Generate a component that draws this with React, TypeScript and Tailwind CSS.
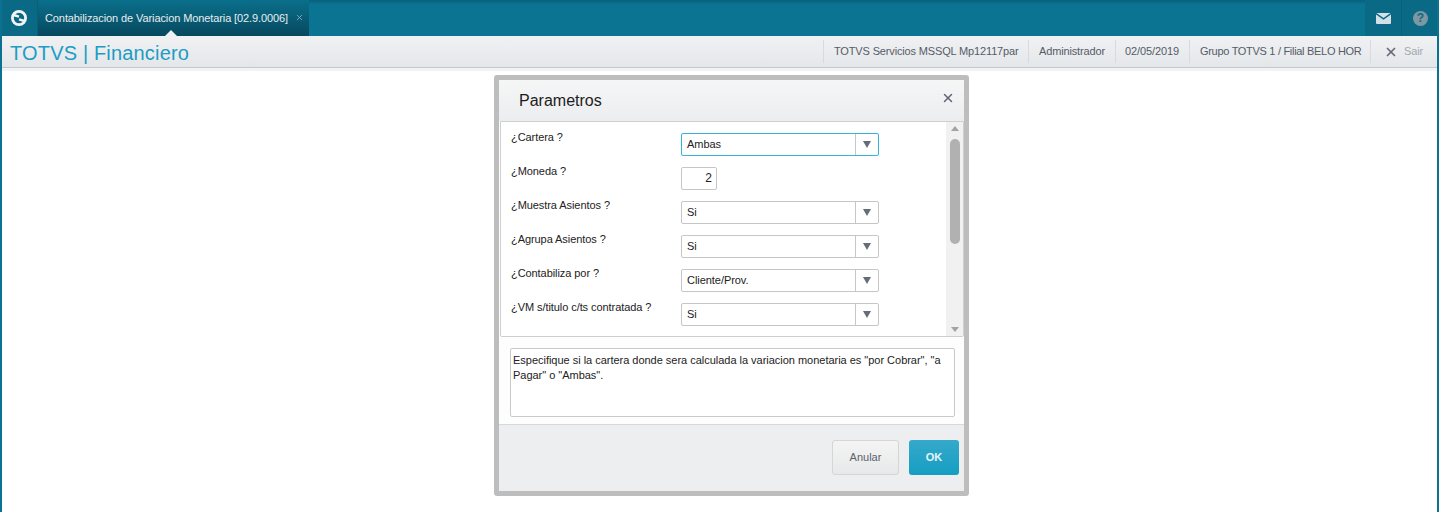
import { X } from 'lucide-react';

const ROWS = [
  { label: '¿Cartera ?', value: 'Ambas', active: true },
  { label: '¿Moneda ?', value: '2', number: true },
  { label: '¿Muestra Asientos ?', value: 'Si' },
  { label: '¿Agrupa Asientos ?', value: 'Si' },
  { label: '¿Contabiliza por ?', value: 'Cliente/Prov.' },
  { label: '¿VM s/titulo c/ts contratada ?', value: 'Si' },
];

const INFO = ['TOTVS Servicios MSSQL Mp12117par', 'Administrador', '02/05/2019', 'Grupo TOTVS 1 / Filial BELO HOR'];

function Logo() {
  return (
    <svg width="18" height="18" viewBox="0 0 18 18" fill="none">
      <circle cx="9" cy="9" r="6.6" stroke="#f1f5f7" strokeWidth="2.8" />
      <path d="M3.5 6 L9 7.6 M9 10.4 L14.5 12" stroke="#f1f5f7" strokeWidth="2.4" />
    </svg>
  );
}

function Field({ value, active }: { value: string; active?: boolean }) {
  return (
    <div className={`flex h-[23px] w-[198px] rounded-[2px] border bg-white ${active ? 'border-[#36b4d6]' : 'border-[#c6c6c6]'}`}>
      <span className="flex-1 pl-[5px] text-[11px] leading-[21px] tracking-[-0.05px] text-[#222]">{value}</span>
      <span className="flex w-[23px] items-center justify-center border-l border-[#c6c6c6]">
        <span className="h-0 w-0 border-x-[4.5px] border-t-[7px] border-x-transparent border-t-[#666c78]" />
      </span>
    </div>
  );
}

export default function App() {
  return (
    <div className="flex h-[512px] flex-col overflow-hidden border-x-2 border-[#0a7290] bg-white font-['Liberation_Sans',Arial,sans-serif]">
      {/* Top bar */}
      <div className="-mx-[2px] flex h-9 shrink-0 bg-[linear-gradient(#09607a,#0b7492_12%,#0b7492)]">
        <div className="flex w-[38px] items-center justify-center border-r border-[#095f78] bg-[#0a6a85]">
          <Logo />
        </div>
        <div className="relative flex w-[271px] items-center whitespace-nowrap bg-[linear-gradient(#0a6f8b,#07495f)] pl-[7px] text-[11px] tracking-[-0.1px] text-[#e6eef1]">
          <span>Contabilizacion de Variacion Monetaria [02.9.0006]</span>
          <X size={9} strokeWidth={2} className="ml-[7px] -translate-y-px text-[#9db9c4]" />
          <span className="absolute bottom-0 left-[127px] h-0 w-0 border-x-[6px] border-b-[6px] border-x-transparent border-b-[#eef0f2]" />
        </div>
        <div className="flex-1" />
        <div className="flex w-[37px] items-center justify-center border-r border-[#095f78] bg-[#0a6a85]">
          <svg width="15" height="11" viewBox="0 0 15 11">
            <path d="M0.5 0 H14.5 L7.5 5 Z" fill="#d3e1e7" />
            <path d="M0 1.5 L7.5 6.8 L15 1.5 V10 Q15 11 14 11 H1 Q0 11 0 10 Z" fill="#d3e1e7" />
          </svg>
        </div>
        <div className="flex w-[37px] items-center justify-center bg-[#0a6a85]">
          <span className="flex h-[15px] w-[15px] items-center justify-center rounded-full bg-[#7d97a3] text-[12px] font-bold text-[#0a6a85]">?</span>
        </div>
      </div>

      {/* Sub header */}
      <div className="flex h-[32px] shrink-0 items-center border-b border-[#c4c8cc] bg-[linear-gradient(#f0f1f3,#e4e7ea)]">
        <span className="translate-y-px pl-2 text-[20px] leading-none tracking-[0.17px] text-[#1e9cc4]">TOTVS | Financiero</span>
        <div className="ml-auto flex h-[23px] items-center text-[11px] text-[#555c66]">
          <span className="flex h-full w-[205px] items-center border-l border-[#d8dbde] pl-[10px] tracking-[-0.15px]">{INFO[0]}</span>
          <span className="flex h-full w-[87px] items-center border-l border-[#d8dbde] pl-[10px] tracking-[-0.15px]">{INFO[1]}</span>
          <span className="flex h-full w-[74px] items-center border-l border-[#d8dbde] pl-[9px] tracking-[-0.1px]">{INFO[2]}</span>
          <span className="flex h-full w-[181px] items-center border-l border-[#d8dbde] pl-[10px] tracking-[-0.3px]">{INFO[3]}</span>
          <span className="flex h-full w-[67px] items-center border-l border-[#d8dbde] pl-[13px]">
            <X size={14} strokeWidth={3} className="text-[#666d79]" />
            <span className="ml-[6px] tracking-[-0.1px] text-[#a3a8ae]">Sair</span>
          </span>
        </div>
      </div>
      <div className="h-[3px] shrink-0 bg-[#f2f3f4]" />

      {/* Dialog */}
      <div className="flex-1 pl-[492px] pt-1">
        <div className="h-[421px] w-[475px] overflow-hidden rounded-[3px] border-[5px] border-[#bdbdbd] bg-[#fdfdfd]">
          <div className="flex h-[41px] items-center justify-between bg-[linear-gradient(#f5f6f6,#ecedef)] pl-5 pr-[9px]">
            <span className="text-[16px] text-[#1d1d1d]">Parametros</span>
            <X size={14} strokeWidth={2.5} className="-translate-y-[3px] text-[#5f6672]" />
          </div>
          {/* Questions */}
          <div className="ml-px flex h-[216px] rounded-b-[2px] border border-[#cfcfcf] bg-white">
            <div className="flex-1 pl-[10px] pt-[11px]">
              {ROWS.map((r) => (
                <div key={r.label} className="flex h-[34px]">
                  <span className="w-[170px] -translate-y-px text-[11px] leading-[11px] tracking-[-0.07px] text-[#222]">{r.label}</span>
                  {r.number ? (
                    <div className="h-[23px] w-9 rounded-[2px] border border-[#c6c6c6] pr-[4px] text-right text-[12px] leading-[21px] text-[#222]">{r.value}</div>
                  ) : (
                    <Field value={r.value} active={r.active} />
                  )}
                </div>
              ))}
            </div>
            <div className="flex w-[17px] flex-col items-center bg-[#f1f1f1]">
              <span className="mt-[4px] h-0 w-0 border-x-[4px] border-b-[5px] border-x-transparent border-b-[#a3a3a3]" />
              <span className="mt-[8px] h-[105px] w-[10px] rounded-[5px] bg-[#b1b1b1]" />
              <span className="mt-auto mb-[4px] h-0 w-0 border-x-[4px] border-t-[5px] border-x-transparent border-t-[#a3a3a3]" />
            </div>
          </div>
          {/* Help text */}
          <div className="mx-[11px] mt-[11px] h-[69px] w-[445px] rounded-[2px] border border-[#c9c9c9] bg-white pl-[2px] pr-[3px] pt-[4px] text-[11px] leading-[15px] tracking-[-0.02px] text-[#222]">
            Especifique si la cartera donde sera calculada la variacion monetaria es "por Cobrar", "a Pagar" o "Ambas".
          </div>
          {/* Footer */}
          <div className="mt-[7px] flex h-[67px] justify-end gap-[10px] border-t border-[#d7d8d9] bg-[#eceef0] pr-[5px] pt-[15px]">
            <button className="h-[35px] w-[67px] rounded-[3px] border border-[#d4d5d6] bg-[linear-gradient(#f4f4f4,#e7e8e9)] text-[11px] text-[#5a6470]">Anular</button>
            <button className="h-[35px] w-[50px] rounded-[3px] bg-[linear-gradient(#35a9c9,#159ec3)] text-[11px] font-bold text-[#e8f5f9]">OK</button>
          </div>
        </div>
      </div>
    </div>
  );
}
